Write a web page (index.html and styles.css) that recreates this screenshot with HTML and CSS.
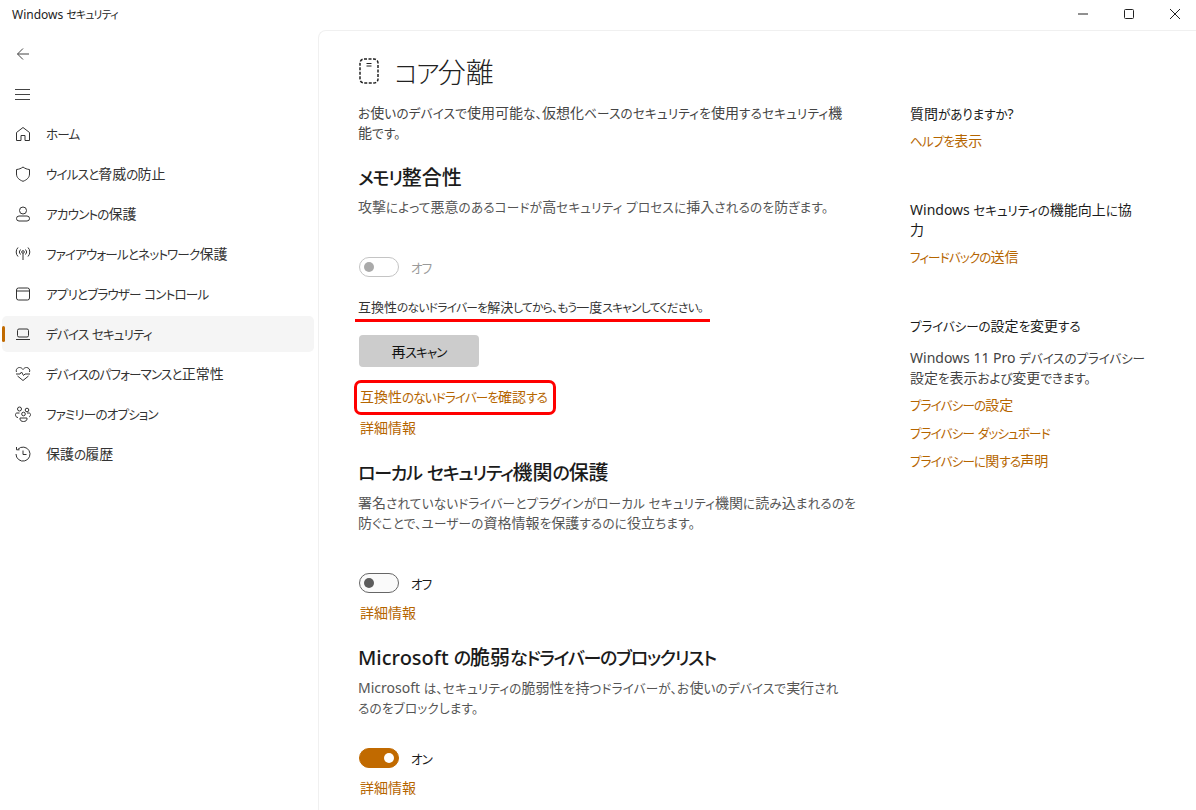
FILE: index.html
```html
<!DOCTYPE html>
<html lang="ja">
<head>
  <meta charset="UTF-8">
  <title>Windows セキュリティ</title>
  <link rel="stylesheet" href="styles.css">
</head>
<body>
  <div class="window">
    <div class="titlebar">
      <span class="app-title">Windows セキュリティ</span>
      <div class="win-buttons">
        <svg width="12" height="12" viewBox="0 0 12 12"><path d="M1 6h10" stroke="#222" fill="none"/></svg>
        <svg width="12" height="12" viewBox="0 0 12 12"><rect x="1.5" y="1.5" width="9" height="9" rx="1" stroke="#222" fill="none"/></svg>
        <svg width="12" height="12" viewBox="0 0 12 12"><path d="M1 1l10 10M11 1L1 11" stroke="#222" fill="none"/></svg>
      </div>
    </div>
    <div class="body-row">
      <!-- Menu laterale -->
      <nav class="sidebar">
        <div class="nav-tool">
          <svg width="16" height="16" viewBox="0 0 16 16" fill="none" stroke="#444"><path d="M14 8H2.5M8 2.5L2.5 8 8 13.5"/></svg>
        </div>
        <div class="nav-tool">
          <svg width="16" height="16" viewBox="0 0 16 16" fill="none" stroke="#444"><path d="M0 3.5h15M0 8.5h15M0 13.5h15"/></svg>
        </div>
        <a class="nav-item">
          <svg width="16" height="16" viewBox="0 0 16 16" fill="none" stroke="#333"><path d="M1.5 14.5V6.5L8 1.5l6.5 5v8h-4.5v-5H6v5z" stroke-linejoin="round"/></svg>
          <span>ホーム</span>
        </a>
        <a class="nav-item">
          <svg width="16" height="16" viewBox="0 0 16 16" fill="none" stroke="#333"><path d="M8 1c2 1.5 4 2.3 6.5 2.5V8c0 3.5-2.5 5.8-6.5 7.3C4 13.8 1.5 11.5 1.5 8V3.5C4 3.3 6 2.5 8 1z" stroke-linejoin="round"/></svg>
          <span>ウイルスと脅威の防止</span>
        </a>
        <a class="nav-item">
          <svg width="16" height="16" viewBox="0 0 16 16" fill="none" stroke="#333"><circle cx="8" cy="4.5" r="3.5"/><rect x="1.5" y="10" width="13" height="5" rx="2.5"/></svg>
          <span>アカウントの保護</span>
        </a>
        <a class="nav-item">
          <svg width="16" height="16" viewBox="0 0 16 16" fill="none" stroke="#333"><circle cx="8" cy="6" r="1.3"/><path d="M8 7.5V14M5.5 3.5a3.5 3.5 0 0 0 0 5M10.5 3.5a3.5 3.5 0 0 1 0 5M3 1.5a6.5 6.5 0 0 0 0 9M13 1.5a6.5 6.5 0 0 1 0 9"/></svg>
          <span>ファイアウォールとネットワーク保護</span>
        </a>
        <a class="nav-item">
          <svg width="16" height="16" viewBox="0 0 16 16" fill="none" stroke="#333"><rect x="1.5" y="2" width="13" height="12" rx="2"/><path d="M1.5 5h13"/></svg>
          <span>アプリとブラウザー コントロール</span>
        </a>
        <a class="nav-item active">
          <svg width="16" height="16" viewBox="0 0 16 16" fill="none" stroke="#333"><rect x="2.5" y="3" width="11" height="8" rx="1.5"/><path d="M1 13.5h14"/></svg>
          <span>デバイス セキュリティ</span>
        </a>
        <a class="nav-item">
          <svg width="16" height="16" viewBox="0 0 16 16" fill="none" stroke="#333"><path d="M2.5 10L8 14.5l5.5-4.5M1 8h4l1.5-2 2 3.5L10 8h5M1.5 6C.5 3.5 2.5 1.5 4.5 1.5c1.5 0 2.6.8 3.5 2 .9-1.2 2-2 3.5-2 2 0 4 2 3 4.5" stroke-linejoin="round"/></svg>
          <span>デバイスのパフォーマンスと正常性</span>
        </a>
        <a class="nav-item">
          <svg width="16" height="16" viewBox="0 0 16 16" fill="none" stroke="#333"><circle cx="4.5" cy="3" r="2"/><circle cx="12" cy="4" r="1.8"/><circle cx="8.5" cy="8" r="1.8"/><path d="M3 11.5c-1.5 0-2.5-1-2.5-3 0-1 .7-1.5 1.5-1.5h2.5M12 7h2c.8 0 1.5.5 1.5 1.5 0 1-.5 2-1.5 2.5M5 12h7v1c0 1.5-1.5 2.5-3.5 2.5S5 14.5 5 13z"/></svg>
          <span>ファミリーのオプション</span>
        </a>
        <a class="nav-item">
          <svg width="16" height="16" viewBox="0 0 16 16" fill="none" stroke="#333"><path d="M3 3.2A7 7 0 1 1 1 8M1.5 1v2.8h3M8 4.5V8.5h3.5"/></svg>
          <span>保護の履歴</span>
        </a>
      </nav>

      <!-- Contenuto -->
      <main class="content">
        <div class="col-main">
          <div class="page-head">
            <svg width="22" height="26" viewBox="0 0 22 26" fill="none" stroke="#222" stroke-width="1.5"><rect x="2" y="1" width="18" height="24" rx="4" stroke-dasharray="3 1.5"/><path d="M8.5 5.5h5M8.5 8h5" stroke-width="1"/></svg>
            <h1>コア分離</h1>
          </div>
          <p class="desc intro">お使いのデバイスで使用可能な、仮想化ベースのセキュリティを使用するセキュリティ機<br>能です。</p>

          <h2>メモリ整合性</h2>
          <p class="desc">攻撃によって悪意のあるコードが高セキュリティ プロセスに挿入されるのを防ぎます。</p>
          <div class="toggle-row disabled">
            <span class="toggle"></span><span>オフ</span>
          </div>
          <p class="warning">互換性のないドライバーを解決してから、もう一度スキャンしてください。</p>
          <button class="rescan">再スキャン</button>
          <a class="link boxed">互換性のないドライバーを確認する</a>
          <a class="link more">詳細情報</a>

          <h2>ローカル セキュリティ機関の保護</h2>
          <p class="desc">署名されていないドライバーとプラグインがローカル セキュリティ機関に読み込まれるのを<br>防ぐことで、ユーザーの資格情報を保護するのに役立ちます。</p>
          <div class="toggle-row">
            <span class="toggle"></span><span>オフ</span>
          </div>
          <a class="link">詳細情報</a>

          <h2>Microsoft の脆弱なドライバーのブロックリスト</h2>
          <p class="desc">Microsoft は、セキュリティの脆弱性を持つドライバーが、お使いのデバイスで実行され<br>るのをブロックします。</p>
          <div class="toggle-row last">
            <span class="toggle on"></span><span>オン</span>
          </div>
          <a class="link">詳細情報</a>
        </div>

        <aside class="col-side">
          <section>
            <p>質問がありますか?</p>
            <a class="link">ヘルプを表示</a>
          </section>
          <section>
            <p>Windows セキュリティの機能向上に協<br>力</p>
            <a class="link">フィードバックの送信</a>
          </section>
          <section>
            <p>プライバシーの設定を変更する</p>
            <p class="side-text">Windows 11 Pro デバイスのプライバシー<br>設定を表示および変更できます。</p>
            <a class="link">プライバシーの設定</a>
            <a class="link">プライバシー ダッシュボード</a>
            <a class="link">プライバシーに関する声明</a>
          </section>
        </aside>
      </main>
    </div>
  </div>
  <script src="script.js"></script>
</body>
</html>
```

FILE: styles.css
```css
* {
  margin: 0;
  padding: 0;
  box-sizing: border-box;
}
body {
  font-family: "Noto Sans", "Noto Sans CJK JP", sans-serif;
  font-size: 14px;
  font-feature-settings: "palt";
  color: #1b1b1b;
  background: #fff;
  overflow: hidden;
}
/* kana piu' strette, come nel font di sistema */
.kana {
  font-size: 0.9em;
  line-height: 1;
  letter-spacing: -0.07em;
}
.desc .kana {
  letter-spacing: 0.015em;
}
.col-side p .kana {
  letter-spacing: -0.01em;
}
.warning .kana {
  letter-spacing: -0.06em;
}
.window {
  width: 1196px;
  height: 810px;
  display: flex;
  flex-direction: column;
  overflow: hidden;
}
.titlebar {
  height: 30px;
  flex: none;
  display: flex;
  align-items: center;
  justify-content: space-between;
  padding: 0 15px 2px 12px;
}
.app-title {
  font-size: 12px;
  color: #222;
}
.win-buttons {
  display: flex;
  gap: 34px;
}
.body-row {
  flex: 1;
  display: flex;
  min-height: 0;
}

/* Sidebar */
.sidebar {
  width: 318px;
  flex: none;
  padding: 4px 4px 0 2px;
}
.nav-tool {
  height: 40px;
  display: flex;
  align-items: center;
  padding-left: 13px;
}
.nav-tool + .nav-item {
  margin-top: 2px;
}
.nav-item {
  position: relative;
  height: 36px;
  margin-bottom: 4px;
  display: flex;
  align-items: center;
  gap: 15px;
  padding-left: 13px;
  border-radius: 5px;
  color: #333;
}
.nav-item span {
  padding-bottom: 2px;
}
.nav-item.active {
  background: #f5f5f5;
}
.nav-item.active::before {
  content: "";
  position: absolute;
  left: 0;
  top: 10px;
  width: 3px;
  height: 16px;
  border-radius: 2px;
  background: #c16a00;
}

/* Contenuto */
.content {
  flex: 1;
  display: flex;
  gap: 57px;
  padding-left: 39px;
  border-top: 1px solid #f0f0f0;
  border-left: 1px solid #f0f0f0;
  border-top-left-radius: 8px;
  overflow: hidden;
}
.col-main {
  width: 495px;
  flex: none;
}
.page-head {
  display: flex;
  align-items: center;
  gap: 14px;
  height: 58px;
  margin-top: 11px;
}
h1 {
  font-size: 28px;
  font-weight: 300;
  color: #222;
}
h2 {
  font-size: 20px;
  font-weight: 500;
  line-height: 28px;
  margin-top: 21px;
  margin-bottom: 6px;
  color: #1b1b1b;
}
.intro + h2 {
  margin-bottom: 5px;
}
.desc {
  line-height: 20px;
  color: #555;
  white-space: nowrap;
}
.intro {
  margin-top: 3px;
  color: #444;
}
.toggle-row {
  display: flex;
  align-items: center;
  gap: 12px;
  height: 20px;
  margin: 40px 0 10px 1px;
}
.toggle-row.last {
  margin-top: 30px;
}
.toggle-row.disabled {
  color: #9a9a9a;
}
.toggle {
  position: relative;
  width: 40px;
  height: 20px;
  border: 1px solid #666;
  border-radius: 10px;
  background: #fafafa;
}
.toggle::after {
  content: "";
  position: absolute;
  left: 4px;
  top: 4px;
  width: 10px;
  height: 10px;
  border-radius: 50%;
  background: #5c5c5c;
}
.disabled .toggle {
  border-color: #c4c4c4;
  background: #fff;
}
.disabled .toggle::after {
  background: #aaa;
}
.toggle.on {
  border-color: #c16a00;
  background: #c16a00;
}
.toggle.on::after {
  left: 24px;
  background: #fff;
}
.warning {
  border-bottom: 3px solid #f00;
  margin: 20px 0 0 -3px;
  width: 355px;
  padding-left: 3px;
  height: 25px;
  font-size: 13px;
  line-height: 20px;
  white-space: nowrap;
  color: #333;
}
.rescan {
  display: block;
  width: 120px;
  height: 32px;
  margin: 13px 0 0 1px;
  border: none;
  border-radius: 4px;
  background: #ccc;
  font: inherit;
  font-feature-settings: "palt";
  color: #111;
}
.link {
  display: block;
  margin-left: 2px;
  color: #b56500;
  line-height: 20px;
}
.boxed {
  width: 202px;
  height: 35px;
  margin: 13px 0 0 -4px;
  padding: 3px 0 0 3px;
  border: 3px solid #f00;
  border-radius: 7px;
  line-height: 21px;
  white-space: nowrap;
}
.more {
  margin-top: 3px;
  margin-bottom: 1px;
}

/* Colonna destra */
.col-side {
  width: 240px;
  flex: none;
  padding-top: 73px;
}
.col-side section {
  margin-bottom: 45px;
}
.col-side p {
  line-height: 20px;
}
.col-side .link {
  margin-left: 0;
  line-height: 28px;
}
.col-side p + .link {
  margin-top: 3px;
}
.col-side .side-text {
  margin-top: 12px;
  color: #444;
}
```

FILE: script.js
```js
// racchiude hiragana e katakana in uno span per stringerli
var walker = document.createTreeWalker(document.body, NodeFilter.SHOW_TEXT);
var nodi = [];
while (walker.nextNode()) {
  nodi.push(walker.currentNode);
}
nodi.forEach(function (nodo) {
  if (nodo.parentNode.tagName === "SCRIPT" || !/[\u3040-\u30ff、。]/.test(nodo.nodeValue)) return;
  var box = document.createElement("span");
  box.innerHTML = nodo.nodeValue.replace(/[\u3040-\u30ff、。]+/g, '<span class="kana">$&</span>');
  while (box.firstChild) {
    nodo.parentNode.insertBefore(box.firstChild, nodo);
  }
  nodo.parentNode.removeChild(nodo);
});
```
